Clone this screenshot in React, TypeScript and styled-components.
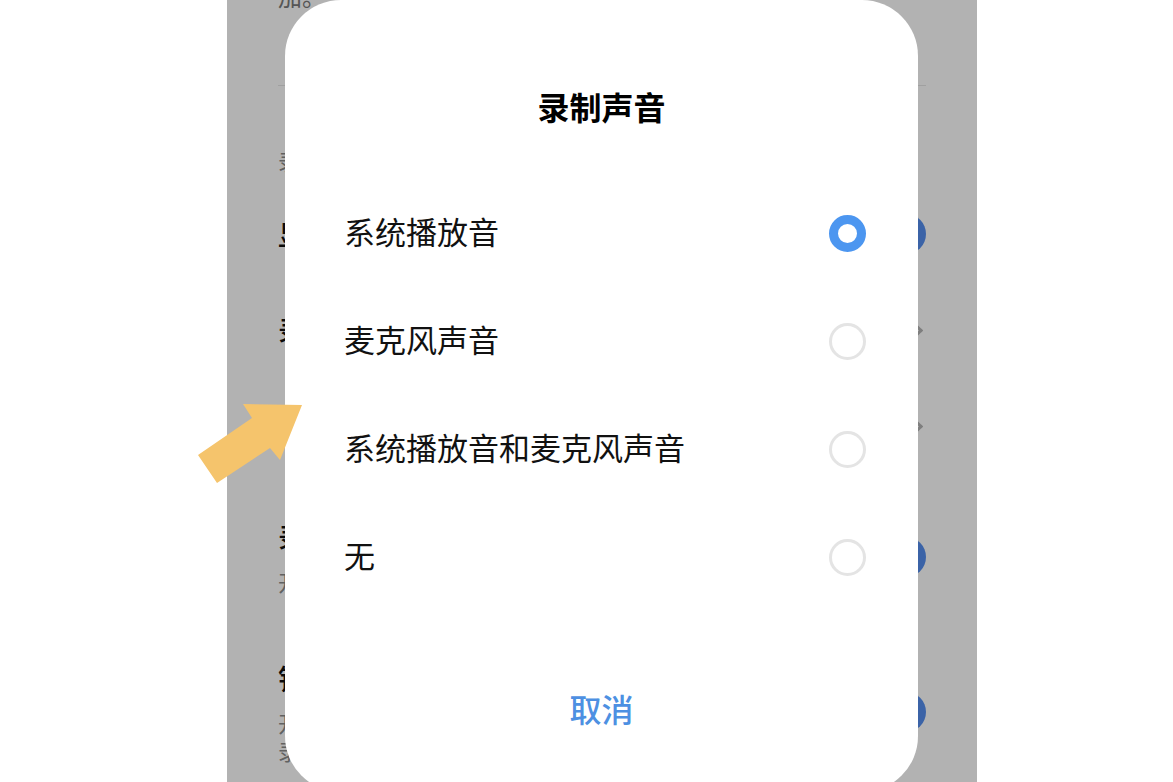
import { useState } from "react";
import styled, { createGlobalStyle } from "styled-components";

const GlobalStyle = createGlobalStyle`
  html, body {
    margin: 0;
    padding: 0;
    background: #ffffff;
  }
  body {
    font-family: "Noto Sans CJK SC", "Noto Sans", sans-serif;
    overflow: hidden;
  }
`;

const options = ["系统播放音", "麦克风声音", "系统播放音和麦克风声音", "无"];

const App = () => {
  const [selected, setSelected] = useState(0);

  return (
    <>
      <GlobalStyle />
      <Stage>
        <Phone>
          <Settings>
            <Intro>
              开启后可录制麦克风声音，请在设置中添
              <br />
              加。
            </Intro>
            <Divider />
            <SectionTitle>录屏设置</SectionTitle>

            <RowGroup>
              <SettingRow>
                <RowText>
                  <RowTitle>显示触摸</RowTitle>
                </RowText>
                <Toggle />
              </SettingRow>

              <SettingRow>
                <RowText>
                  <RowTitle>录制声音</RowTitle>
                </RowText>
                <Chevron />
              </SettingRow>

              <SettingRow>
                <RowText>
                  <RowTitle>画质</RowTitle>
                </RowText>
                <Chevron />
              </SettingRow>

              <SettingRow $tall>
                <RowText>
                  <RowTitle>录屏锁定</RowTitle>
                  <RowNote>开启后锁屏结束</RowNote>
                </RowText>
                <Toggle />
              </SettingRow>

              <SettingRow $tall $top={25}>
                <RowText>
                  <RowTitle>铃声</RowTitle>
                  <RowNote>开启后静音</RowNote>
                  <RowNote $tight>录制后恢复</RowNote>
                </RowText>
                <Toggle />
              </SettingRow>
            </RowGroup>
          </Settings>

          <Scrim />

          <Dialog>
            <DialogTitle>录制声音</DialogTitle>
            <OptionList>
              {options.map((label, i) => (
                <OptionRow key={label} onClick={() => setSelected(i)}>
                  <OptionLabel>{label}</OptionLabel>
                  <Radio $checked={selected === i} />
                </OptionRow>
              ))}
            </OptionList>
            <Cancel>取消</Cancel>
          </Dialog>
        </Phone>

        <Pointer width="110" height="88" viewBox="0 0 110 88">
          <polygon
            points="2,55 56,18 47,4 106,5 84,60 74,48 21,83"
            fill="#f5c46c"
          />
        </Pointer>
      </Stage>
    </>
  );
};

export default App;

const Stage = styled.div`
  position: relative;
  width: 1173px;
  height: 782px;
  padding-left: 227px;
  box-sizing: border-box;
  overflow: hidden;
`;

const Phone = styled.div`
  position: relative;
  width: 750px;
  height: 782px;
  background: #ffffff;
  overflow: hidden;
`;

const Settings = styled.div`
  display: flex;
  flex-direction: column;
  padding: 0 51px;
`;

const Intro = styled.div`
  margin-top: -58px;
  font-size: 24px;
  line-height: 36px;
  color: #7a7a7a;
  white-space: nowrap;
`;

const Divider = styled.div`
  margin-top: 71px;
  height: 1px;
  background: #e6e6e6;
`;

const SectionTitle = styled.div`
  margin-top: 58px;
  font-size: 22px;
  line-height: 32px;
  color: #8a8a8a;
`;

const RowGroup = styled.div`
  margin-top: 10px;
  display: flex;
  flex-direction: column;
`;

const SettingRow = styled.div<{ $tall?: boolean; $top?: number }>`
  display: flex;
  align-items: center;
  justify-content: space-between;
  min-height: 96px;
  padding: ${(p) => (p.$tall ? `${p.$top ?? 45}px 0 40px` : "0")};
  box-sizing: border-box;
`;

const RowText = styled.div`
  display: flex;
  flex-direction: column;
`;

const RowTitle = styled.div`
  font-size: 28px;
  line-height: 36px;
  font-weight: 500;
  color: #111111;
`;

const RowNote = styled.div<{ $tight?: boolean }>`
  margin-top: ${(p) => (p.$tight ? "0" : "12px")};
  font-size: 22px;
  line-height: 28px;
  color: #8c8c8c;
`;

const Toggle = styled.div`
  width: 80px;
  height: 40px;
  border-radius: 20px;
  background: #558ff0;
  flex-shrink: 0;
`;

const Chevron = styled.div`
  width: 12px;
  height: 12px;
  margin-right: 6px;
  border-top: 3px solid #b5b5b5;
  border-right: 3px solid #b5b5b5;
  transform: rotate(45deg);
`;

const Scrim = styled.div`
  position: absolute;
  inset: 0;
  background: rgba(0, 0, 0, 0.3);
`;

const Dialog = styled.div`
  position: absolute;
  top: 0;
  left: 58px;
  width: 633px;
  height: 792px;
  border-radius: 56px;
  background: #ffffff;
  display: flex;
  flex-direction: column;
  align-items: center;
`;

const DialogTitle = styled.div`
  margin-top: 86px;
  font-size: 32px;
  line-height: 40px;
  font-weight: 700;
  color: #000000;
`;

const OptionList = styled.div`
  margin-top: 53px;
  width: 100%;
  display: flex;
  flex-direction: column;
`;

const OptionRow = styled.div`
  height: 108px;
  padding: 0 52px 0 59px;
  display: flex;
  align-items: center;
  justify-content: space-between;
  cursor: pointer;
`;

const OptionLabel = styled.span`
  margin-bottom: 5px;
  font-size: 31px;
  line-height: 40px;
  color: #111111;
`;

const Radio = styled.div<{ $checked: boolean }>`
  width: 37px;
  height: 37px;
  box-sizing: border-box;
  border-radius: 50%;
  border: ${(p) => (p.$checked ? "9px solid #4c96f0" : "3px solid #e4e4e4")};
  flex-shrink: 0;
`;

const Cancel = styled.div`
  margin-top: 77px;
  font-size: 32px;
  line-height: 40px;
  font-weight: 500;
  color: #4d90e2;
  cursor: pointer;
`;

const Pointer = styled.svg`
  position: absolute;
  left: 196px;
  top: 400px;
  pointer-events: none;
`;
